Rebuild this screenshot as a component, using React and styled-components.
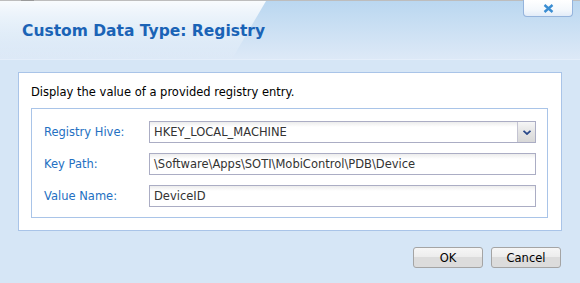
import React from "react";
import styled, { createGlobalStyle } from "styled-components";

const GlobalStyle = createGlobalStyle`
  html, body {
    margin: 0;
    padding: 0;
    background: #d6e6f6;
  }
  body {
    font-family: "DejaVu Sans", Verdana, sans-serif;
  }
`

const Dialog = styled.div`
  width: 580px;
  height: 283px;
  display: flex;
  flex-direction: column;
  background: #d6e6f6;
  overflow: hidden;
`

const Header = styled.div`
  position: relative;
  height: 58px;
  border-top: 1px solid #bdbdbd;
  border-bottom: 1px solid #e4eefa;
  background: linear-gradient(to bottom, #bad7f0, #dde9f7);
  display: flex;
  align-items: center;
  padding-left: 22px;
  &::before {
    content: "";
    position: absolute;
    inset: 0;
    background: linear-gradient(to bottom, rgba(255, 255, 255, 0.9), rgba(255, 255, 255, 0) 100%);
    clip-path: polygon(0 0, 266px 0, 232px 100%, 0 100%);
  }
  &::after {
    content: "";
    position: absolute;
    top: -1px;
    left: 21px;
    width: 13px;
    height: 1px;
    background: #9a9a9a;
  }
`

const Title = styled.h1`
  position: relative;
  margin: 2px 0 0;
  font-size: 15.5px;
  font-weight: bold;
  color: #1a63b6;
`

const CloseButton = styled.button`
  position: absolute;
  top: -1px;
  right: 7px;
  width: 50px;
  height: 17px;
  padding: 0;
  border: 1px solid #95b4dc;
  border-top: none;
  border-radius: 0 0 4px 4px;
  background: linear-gradient(to bottom, #ffffff, #f4f8fc 60%, #e2ecf8);
  display: flex;
  align-items: center;
  justify-content: center;
  cursor: pointer;
`

const Panel = styled.div`
  margin: 12px 18px 0;
  background: #ffffff;
  border: 1px solid #a9c4e8;
  padding: 12px 13px 12px 12px;
`

const Description = styled.p`
  margin: 0 0 8px;
  font-size: 11.5px;
  line-height: 15px;
  color: #000;
`

const Fieldset = styled.div`
  border: 1px solid #a9c4e8;
  padding: 12px 11px 10px 12px;
  display: grid;
  grid-template-columns: 105px 1fr;
  row-gap: 10px;
  align-items: center;
`

const Label = styled.label`
  font-size: 11.5px;
  color: #2470c2;
`

const Field = styled.div`
  position: relative;
  height: 22px;
  box-sizing: border-box;
  border: 1px solid #abadc4;
  background: linear-gradient(to bottom, #ececec, #ffffff 5px);
  display: flex;
  align-items: center;
  padding-left: 4px;
  font-size: 11.5px;
  color: #333;
  white-space: nowrap;
  overflow: hidden;
`

const DropButton = styled.span`
  position: absolute;
  top: 0;
  right: 0;
  bottom: 0;
  width: 17px;
  border-left: 1px solid #c4c4d2;
  background: linear-gradient(to bottom, #f6f6f6, #e4e4e4 50%, #d8d8d8);
  display: flex;
  align-items: center;
  justify-content: center;
`

const Footer = styled.div`
  display: flex;
  justify-content: flex-end;
  gap: 8px;
  padding: 16px 19px 0 0;
`

const Button = styled.button`
  width: 70px;
  height: 21px;
  padding: 0;
  border: 1px solid #a4a4a4;
  border-radius: 3px;
  background: linear-gradient(to bottom, #f6f6f6, #ececec 50%, #dcdcdc 50%, #dcdcdc);
  font-family: "DejaVu Sans", Verdana, sans-serif;
  font-size: 11.5px;
  color: #000;
  cursor: pointer;
`

function CloseIcon() {
  return (
    <svg width="11" height="9" viewBox="0 0 11 9">
      <path d="M1.5 1 L9.5 8 M9.5 1 L1.5 8" stroke="#3a8dd2" strokeWidth="2.4" strokeLinecap="butt" />
    </svg>
  );
}

function Chevron() {
  return (
    <svg width="8" height="5" viewBox="0 0 8 5">
      <path d="M0.5 0.8 L4 4 L7.5 0.8" stroke="#29488a" strokeWidth="1.8" fill="none" />
    </svg>
  );
}

export default function App() {
  return (
    <Dialog>
      <GlobalStyle />
      <Header>
        <Title>Custom Data Type: Registry</Title>
        <CloseButton aria-label="Close">
          <CloseIcon />
        </CloseButton>
      </Header>
      <Panel>
        <Description>Display the value of a provided registry entry.</Description>
        <Fieldset>
          <Label>Registry Hive:</Label>
          <Field>
            HKEY_LOCAL_MACHINE
            <DropButton>
              <Chevron />
            </DropButton>
          </Field>
          <Label>Key Path:</Label>
          <Field>\Software\Apps\SOTI\MobiControl\PDB\Device</Field>
          <Label>Value Name:</Label>
          <Field>DeviceID</Field>
        </Fieldset>
      </Panel>
      <Footer>
        <Button>OK</Button>
        <Button>Cancel</Button>
      </Footer>
    </Dialog>
  );
}
